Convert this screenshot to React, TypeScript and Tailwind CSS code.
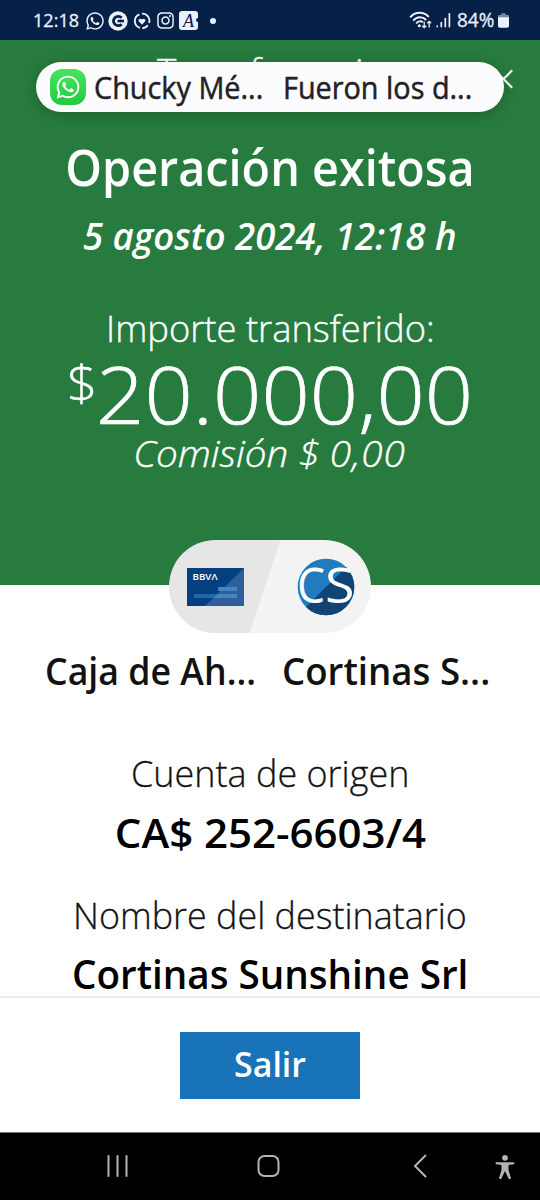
import { FaInstagram, FaWhatsapp } from 'react-icons/fa';

function StatusBar() {
  return (
    <header className="flex h-10 items-center bg-[#062047] pl-[33px] pr-[31px] text-[19px] font-medium text-[#eaf1fb] [-webkit-text-stroke:0.3px_#eaf1fb]">
      <span className="w-[46px] origin-left scale-x-[0.95] whitespace-nowrap leading-10">12:18</span>
      <FaWhatsapp className="ml-[6px] mt-[2px] size-[20px]" />
      <svg className="ml-[3px] mt-[1px] size-[20px]" viewBox="0 0 20 20">
        <circle cx="10" cy="10" r="9.7" fill="#eaf1fb" />
        <path d="M13.6 6.8A4.7 4.7 0 1 0 13.6 13.2" fill="none" stroke="#062047" strokeWidth="2.8" />
        <path d="M9.5 10H16" stroke="#062047" strokeWidth="2.6" />
      </svg>
      <svg className="ml-[5px] mt-[1px] size-[18px]" viewBox="0 0 18 18" fill="none" stroke="#eaf1fb" strokeWidth="1.9">
        <path d="M7 15.9A7.2 7.2 0 0 1 6.4 2.3M9 1.6A7.2 7.2 0 0 1 16.1 11M14.8 13.3A7.2 7.2 0 0 1 9.3 16.2" />
        <path d="M9 12.8 5.9 9.6C4.5 8 6.9 5.4 9 7.4c2.1-2 4.5.6 3.1 2.2Z" fill="#eaf1fb" stroke="none" />
      </svg>
      <FaInstagram className="ml-[5px] mt-[1px] size-[19px]" />
      <span className="relative ml-[4px] mt-[1px] flex h-[19px] w-[19px] items-center justify-center rounded-[3px] bg-[#eaf1fb] font-['Liberation_Serif',serif] text-[18px] font-normal italic leading-none text-[#062047] [-webkit-text-stroke:0px]">
        A
        <i className="absolute -right-[2px] top-[7px] size-[4px] rounded-full bg-[#062047]" />
      </span>
      <i className="ml-[12px] mt-[1px] size-[6px] rounded-full bg-[#eaf1fb]" />
      <svg className="ml-auto h-[18px] w-[24px]" viewBox="0 0 24 18" fill="none" stroke="#eaf1fb" strokeWidth="1.9">
        <path d="M1.2 6.4C6 .4 15 .2 19.8 6M4.2 9.6C8 5.2 13.6 5.2 17.2 9M7.2 12.5C9 10 12 9.7 13.8 11.2" />
        <circle cx="10.3" cy="14.8" r="1.5" fill="#eaf1fb" stroke="none" />
        <path d="M15.2 10.5v6M13.2 14.7l2 2 2-2M20.2 16.5v-6M18.2 12.3l2-2 2 2" strokeWidth="1.3" />
      </svg>
      <svg className="ml-[3px] h-[16px] w-[15px]" viewBox="0 0 15 16" stroke="#eaf1fb" strokeWidth="1.7" strokeLinecap="round">
        <path d="M1.2 14.2v.4M5.3 10.5v4.1M9.3 6.5v8.1M13.4 1.8v12.8" />
      </svg>
      <span className="ml-[6px] w-[38px] origin-left scale-x-[0.97] whitespace-nowrap text-[19.5px] leading-10">84%</span>
      <svg className="ml-[3px] mt-[1px] h-[15px] w-[11px]" viewBox="0 0 12 16">
        <path d="M3.5 0h5v2H11a1 1 0 0 1 1 1v3H0V3a1 1 0 0 1 1-1h2.5Z" fill="#77879f" />
        <path d="M0 4.5h12v9.5a2 2 0 0 1-2 2H2a2 2 0 0 1-2-2Z" fill="#eaf1fb" />
      </svg>
    </header>
  );
}

function Notification() {
  return (
    <div className="absolute left-9 top-[62px] flex h-[50px] w-[468px] items-center rounded-full bg-[#fcfcfe] pl-[14px] text-[31px] font-medium leading-[50px] text-[#222226] shadow-[0_3px_14px_rgba(0,0,0,0.22)] [-webkit-text-stroke:0.5px_#222226]">
      <span className="flex size-9 shrink-0 items-center justify-center rounded-[12px] bg-linear-to-b from-[#46e560] to-[#22c93f] text-white">
        <FaWhatsapp className="size-[26px]" />
      </span>
      <span className="ml-[8px] w-[189px] origin-left scale-x-[0.93] whitespace-nowrap">Chucky Mé...</span>
      <span className="origin-left scale-x-[0.93] whitespace-nowrap">Fueron los d...</span>
    </div>
  );
}

function Accounts() {
  return (
    <div className="relative mx-auto -mt-[45px] flex h-[93px] w-[202px] items-center overflow-hidden rounded-full bg-[linear-gradient(108.5deg,#e6e6e6_47.6%,#f3f3f3_48%)]">
      <svg className="ml-[18px] h-[38px] w-[57px]" viewBox="0 0 57 38">
        <rect width="57" height="38" fill="#043f7f" />
        <path d="M57 0v38H18Z" fill="#2d609a" />
        <rect x="31" y="19" width="19" height="4" fill="#4385be" />
        <rect x="7" y="26" width="43" height="4" fill="#1e68ab" />
        <path d="M30.5 26H50v4H26.5Z" fill="#4385be" />
        <text x="5.5" y="12.3" fill="white" fontFamily="Open Sans, sans-serif" fontSize="9" fontWeight="600" textLength="25" lengthAdjust="spacingAndGlyphs">BBVΛ</text>
      </svg>
      <svg className="ml-[53px] h-[58px] w-[58px]" viewBox="0 0 58 58">
        <defs>
          <clipPath id="avatar"><circle cx="29" cy="29" r="28.3" /></clipPath>
        </defs>
        <g clipPath="url(#avatar)">
          <rect width="58" height="58" fill="#227bbf" />
          <path d="M58 0v58H0Z" fill="#114475" />
        </g>
        <g fill="white" fontFamily="Open Sans, sans-serif" fontSize="50" fontWeight="400">
          <text x="0" y="45" textLength="28" lengthAdjust="spacingAndGlyphs">C</text>
          <text x="28" y="45" textLength="29.5" lengthAdjust="spacingAndGlyphs">S</text>
        </g>
      </svg>
    </div>
  );
}

function NavBar() {
  return (
    <nav className="h-[68px] border-t border-[#777] bg-black">
      <svg className="block" width="540" height="67" viewBox="0 1133 540 67" fill="none" stroke="#b4b4b4" strokeWidth="2" strokeLinecap="round">
        <path d="M108.5 1156v20M117.5 1156v20M126.5 1156v20" />
        <rect x="258.5" y="1156" width="20" height="20" rx="6" />
        <path d="m425.500 1155.500-10.500 10.500 10.500 10.500" />
        <g fill="#b4b4b4" stroke="none">
          <circle cx="505" cy="1157.8" r="2.9" />
          <path d="M496.500 1162.300h17a1 1 0 0 1 0 2l-5 .6v5l2.300 7.500a1.200 1.200 0 0 1-2.400.8l-3.400-7.200-3.400 7.200a1.200 1.200 0 0 1-2.400-.8l2.300-7.500v-5l-5-.6a1 1 0 0 1 0-2Z" />
        </g>
      </svg>
    </nav>
  );
}

export default function App() {
  return (
    <div className="relative flex h-[1200px] w-[540px] flex-col overflow-hidden bg-white font-['Open_Sans','Noto_Sans',sans-serif]">
      <StatusBar />
      <section className="flex h-[545px] shrink-0 flex-col items-center whitespace-nowrap bg-[#277b3e] pt-[11px] text-white">
        <div className="relative w-full text-center text-[37px] font-light leading-10 [-webkit-text-stroke:0.4px_white]">
          Transferencia
          <svg className="absolute left-[494px] top-[18px] size-5" viewBox="0 0 20 20" stroke="white" strokeWidth="2">
            <path d="m.8 1.3 17.400 17.400M.8 18.700 18.200 1.300" />
          </svg>
        </div>
        <h1 className="mt-[51px] scale-x-[0.935] text-[50px] font-semibold leading-[50px]">Operación exitosa</h1>
        <p className="mt-[24px] scale-x-[0.99] text-[37px] font-semibold italic leading-10">5 agosto 2024, 12:18 h</p>
        <p className="mt-[52px] scale-x-[0.982] text-[37px] font-light leading-10 [-webkit-text-stroke:0.4px_white]">Importe transferido:</p>
        <p className="mt-[5px] flex -translate-x-[10px] items-start [-webkit-text-stroke:0.7px_white]">
          <span className="mt-[1px] scale-x-[1.08] text-[50px] font-light leading-[56px] [-webkit-text-stroke:0.4px_white]">$</span>
          <span className="origin-left scale-x-[1.06] text-[80px] font-light leading-[80px]">20.000,00</span>
        </p>
        <p className="scale-x-[1.045] text-[37px] font-light italic leading-10 [-webkit-text-stroke:0.4px_white]">Comisión $ <span className="tracking-[1px]">0,00</span></p>
      </section>
      <Accounts />
      <main className="flex flex-1 flex-col items-center whitespace-nowrap pt-[18px] text-black">
        <div className="flex w-full text-[37px] font-semibold leading-10 text-[#121212]">
          <span className="ml-[45px] w-[237px] origin-left scale-x-[0.965]">Caja de Ah...</span>
          <span className="origin-left scale-x-[0.99]">Cortinas S...</span>
        </div>
        <p className="mt-[62px] scale-x-[0.972] text-[37px] font-light leading-10 text-[#121212] [-webkit-text-stroke:0.3px_#121212]">Cuenta de origen</p>
        <p className="mt-[20px] scale-x-[1.063] text-[39.5px] font-semibold leading-10">CA$ 252-6603/4</p>
        <p className="mt-[42px] scale-x-[0.97] text-[37px] font-light leading-10 text-[#121212] [-webkit-text-stroke:0.3px_#121212]">Nombre del destinatario</p>
        <p className="mt-[19px] scale-x-[0.99] text-[39px] font-semibold leading-10">Cortinas Sunshine Srl</p>
      </main>
      <footer className="flex h-[136px] shrink-0 items-start justify-center border-t-2 border-[#ececec] bg-white pt-[34px]">
        <button className="h-[67px] w-[180px] bg-[#1973b8] pb-[4px] text-[34px] font-semibold leading-10 text-white">Salir</button>
      </footer>
      <NavBar />
      <Notification />
    </div>
  );
}
